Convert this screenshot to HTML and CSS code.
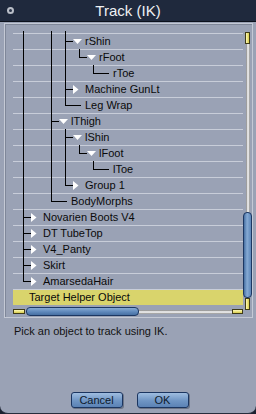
FILE: index.html
```html
<!DOCTYPE html>
<html lang="en">
<head>
    <meta charset="UTF-8" />
    <meta name="viewport" content="width=device-width, initial-scale=1.0" />
    <title>Track (IK)</title>
    <link rel="stylesheet" href="styles.css">
</head>
<body>
    <div class="window">
        <div class="titlebar">
            <span class="closebox"></span>
            <span class="title">Track (IK)</span>
        </div>
        <div class="frame">
            <div class="listcol">
                <div class="tree" id="tree"></div>
                <div class="hscroll">
                    <span class="hcap"></span>
                    <span class="hthumb"></span>
                    <span class="htrack"></span>
                    <span class="hcap"></span>
                </div>
            </div>
            <div class="vscroll">
                <span class="vcap"></span>
                <span class="vtrack"></span>
                <span class="vthumb"></span>
                <span class="vcap"></span>
            </div>
        </div>
        <p class="message">Pick an object to track using IK.</p>
        <div class="buttons">
            <button>Cancel</button>
            <button>OK</button>
        </div>
    </div>
    <script>
        // pattern: one char per guide column. I = pass through, T = branch, L = last branch
        let rows = [
            ["", "I.II", "", "stub"],
            ["rShin", "I.IT", "down"],
            ["rFoot", "I.IIL", "down"],
            ["rToe", "I.II.L", ""],
            ["Machine GunLt", "I.IT", "right"],
            ["Leg Wrap", "I.IL", ""],
            ["lThigh", "I.T", "down"],
            ["lShin", "I.IT", "down"],
            ["lFoot", "I.IIL", "down"],
            ["lToe", "I.II.L", ""],
            ["Group 1", "I.IL", "right"],
            ["BodyMorphs", "I.L", ""],
            ["Novarien Boots V4", "T", "right"],
            ["DT TubeTop", "T", "right"],
            ["V4_Panty", "T", "right"],
            ["Skirt", "T", "right"],
            ["AmarsedaHair", "L", "right"]
        ];

        function guides(pattern, tri, h){
            let c = pattern.length - 1;
            let w = 30 + 14 * c;
            let out = "";
            pattern.split("").forEach((ch, k) => {
                let vx = 10 + 14 * k;
                if(ch === "I" || ch === "T") out += `<rect x="${vx}" y="0" width="1" height="${h}"/>`;
                if(ch === "L") out += `<rect x="${vx}" y="0" width="1" height="9"/>`;
                if(ch === "T" || ch === "L"){
                    out += `<rect x="${vx}" y="8" width="${tri ? 8 : 16}" height="1"/>`;
                    if(tri === "down") out += `<polygon fill="#fff" points="${vx+8},6 ${vx+17},6 ${vx+12.5},11"/>`;
                    if(tri === "right") out += `<polygon fill="#fff" points="${vx+8},4 ${vx+13.5},8.5 ${vx+8},13"/>`;
                }
            });
            return `<svg width="${w}" height="${h}" viewBox="0 0 ${w} ${h}">${out}</svg>`;
        }

        let tree = document.getElementById("tree");
        rows.forEach(r => {
            let div = document.createElement("div");
            if(r[3] === "stub"){
                div.className = "stub";
                div.innerHTML = guides(r[1], "", 2);
            } else {
                div.className = "row";
                div.innerHTML = guides(r[1], r[2], 16) + `<span class="label">${r[0]}</span>`;
            }
            tree.appendChild(div);
        });
        let sel = document.createElement("div");
        sel.className = "row selected";
        sel.innerHTML = `<span class="label">Target Helper Object</span>`;
        tree.appendChild(sel);
    </script>
</body>
</html>
```

FILE: styles.css
```css
body {
    margin: 0;
    background: #1b2130;
    font-family: "Liberation Sans", Arial, sans-serif;
}
.window {
    width: 256px;
    height: 414px;
    box-sizing: border-box;
    display: flex;
    flex-direction: column;
    background: #9aa2b5;
    border-bottom: 1px solid #262d3c;
    border-radius: 0 0 8px 8px;
    overflow: hidden;
}
.titlebar {
    height: 21px;
    display: grid;
    grid-template-columns: 1fr auto 1fr;
    align-items: center;
    background: #1f293d;
    border-bottom: 1px solid #0c111c;
}
.closebox {
    width: 3px;
    height: 3px;
    margin-left: 7px;
    border: 2px solid #b9bec8;
    border-radius: 50%;
    background: #2a3448;
}
.title {
    color: #eef0f3;
    font-size: 15px;
    line-height: 21px;
}
.frame {
    display: flex;
    margin: 1px 3px 0 4px;
    padding: 7px 0 1px 8px;
    border: 1px solid #c4c9d5;
    box-shadow: inset 1px 1px 0 #7f8799;
}
.listcol {
    width: 230px;
    display: flex;
    flex-direction: column;
}
.stub {
    height: 2px;
}
.stub svg, .row svg {
    display: block;
    flex: none;
}
.row {
    height: 16px;
    display: flex;
    align-items: center;
    background: linear-gradient(#c8cdd9, #c8cdd9) top / 100% 1px no-repeat;
    font-size: 11px;
    color: #0a0a0a;
}
.label {
    line-height: 16px;
    white-space: nowrap;
}
.row.selected {
    background: linear-gradient(#c8cdd9, #c8cdd9) top / 100% 1px no-repeat, #d9d46c;
    padding-left: 16px;
}
.hscroll {
    height: 9px;
    margin-top: 2px;
    display: flex;
    align-items: center;
}
.hcap {
    width: 12px;
    height: 5px;
    box-sizing: border-box;
    border: 1px solid #3f3b18;
    background: linear-gradient(#fffbb8, #d8cc4a);
}
.hcap:last-child {
    width: 11px;
}
.hthumb {
    width: 113px;
    height: 9px;
    margin-left: 1px;
    box-sizing: border-box;
    border: 1px solid #1c3762;
    border-radius: 4px;
    background: linear-gradient(#86aad4, #5b85b8 60%, #4770a3);
}
.htrack {
    flex: 1;
    height: 4px;
    background: linear-gradient(#7d7d7d, #ffffff 50%, #8a8a8a);
}
.vscroll {
    width: 9px;
    margin-top: 1px;
    display: flex;
    flex-direction: column;
    align-items: center;
}
.vcap {
    width: 5px;
    height: 12px;
    box-sizing: border-box;
    border: 1px solid #3f3b18;
    background: linear-gradient(90deg, #fffbb8, #d8cc4a);
}
.vtrack {
    width: 4px;
    height: 168px;
    background: linear-gradient(90deg, #7d7d7d, #ffffff 50%, #8a8a8a);
}
.vthumb {
    width: 9px;
    height: 86px;
    box-sizing: border-box;
    border: 1px solid #1c3762;
    border-radius: 4px;
    background: linear-gradient(90deg, #4770a3, #86aad4 45%, #5b85b8);
}
.message {
    margin: 7px 0 0 14px;
    font-size: 11px;
    line-height: 13px;
    color: #121212;
}
.buttons {
    margin-top: auto;
    padding: 0 0 5px 3px;
    display: flex;
    justify-content: center;
    gap: 14px;
}
.buttons button {
    width: 52px;
    height: 16px;
    padding: 0;
    font-family: "Liberation Sans", Arial, sans-serif;
    font-size: 11px;
    color: #0d1a2c;
    border: 1px solid #1b3560;
    border-radius: 3px;
    background: linear-gradient(#9fbde0, #6f95c4 55%, #5b82b4);
    box-shadow: 1px 1px 0 #6c7486;
}
```
